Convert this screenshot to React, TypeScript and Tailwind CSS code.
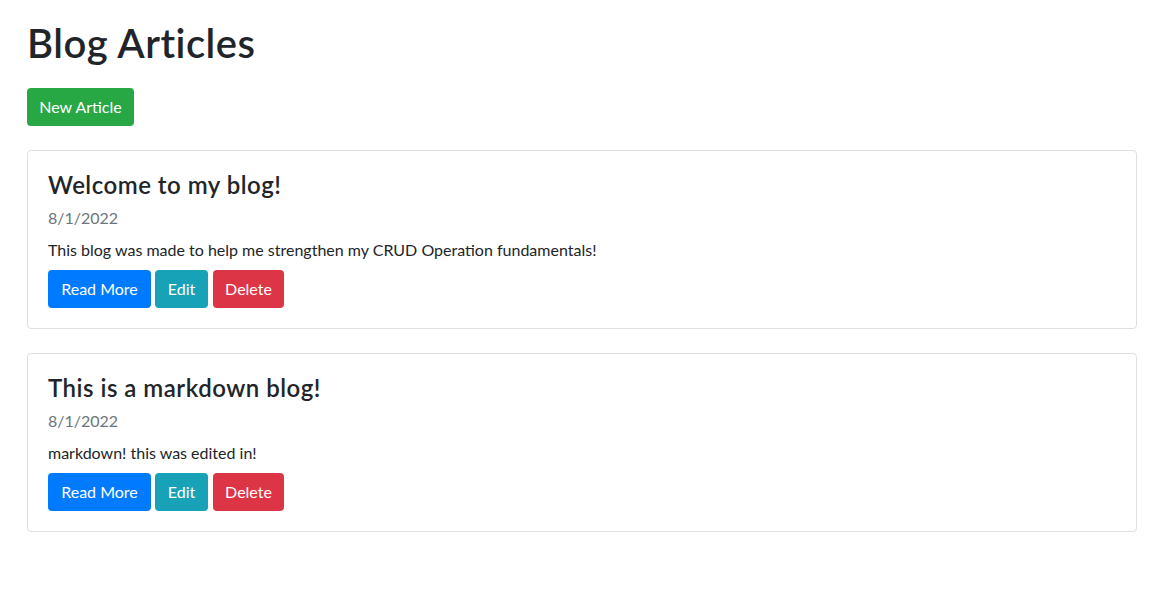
const articles = [
  {
    title: "Welcome to my blog!",
    date: "8/1/2022",
    description: "This blog was made to help me strengthen my CRUD Operation fundamentals!",
  },
  {
    title: "This is a markdown blog!",
    date: "8/1/2022",
    description: "markdown! this was edited in!",
  },
];

const btn = "flex items-center justify-center h-[38px] rounded-[4px] text-white text-[16px] leading-6 whitespace-nowrap";

const ArticleCard = ({ title, date, description }: { title: string; date: string; description: string }) => {
  return (
    <div className="mt-6 rounded-[4px] border border-[#dfdfdf] p-5">
      <h4 className="text-[24px] leading-[28.8px] font-semibold tracking-[0.5px] text-[#212529] mb-[6px]">{title}</h4>
      <div className="text-[16px] leading-6 text-[#6c757d] mb-2">{date}</div>
      <div className="text-[16px] leading-6 text-[#212529] mb-2">{description}</div>
      <div className="flex">
        <a className={`${btn} bg-[#007bff] w-[103px]`}>Read More</a>
        <a className={`${btn} bg-[#17a2b8] w-[53px] ml-1`}>Edit</a>
        <a className={`${btn} bg-[#dc3545] w-[71px] ml-[5px]`}>Delete</a>
      </div>
    </div>
  );
};

export default function App() {
  return (
    <div className="min-h-[599px] bg-white" style={{ fontFamily: 'Lato, "Noto Sans", sans-serif' }}>
      <div className="w-[1110px] ml-[27px] pt-[19px]">
        <h1 className="text-[40px] leading-[48px] font-semibold tracking-[0.5px] text-[#212529] mb-[21px]">Blog Articles</h1>
        <div className="flex">
          <a className={`${btn} bg-[#28a745] w-[107px]`}>New Article</a>
        </div>
        {articles.map((a) => (
          <ArticleCard key={a.title} {...a} />
        ))}
      </div>
    </div>
  );
}
